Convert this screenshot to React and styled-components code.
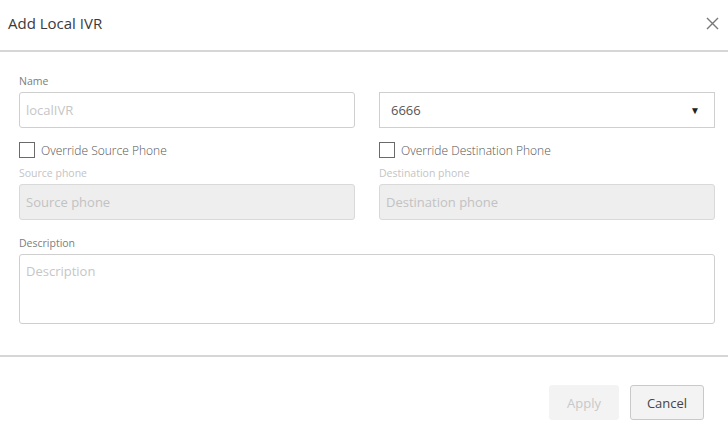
import React from 'react'
import styled, { createGlobalStyle } from 'styled-components'

const GlobalStyle = createGlobalStyle`
  html, body {
    margin: 0;
    padding: 0;
    background: #fff;
    font-family: 'Open Sans', 'Liberation Sans', sans-serif;
  }
  * { box-sizing: border-box; }
`

const Dialog = styled.div`
  width: 728px;
  height: 424px;
  background: #fff;
  overflow: hidden;
`

const Header = styled.div`
  height: 52px;
  display: flex;
  align-items: center;
  justify-content: space-between;
  padding: 0 6px 4px 8px;
  border-bottom: 2px solid #d6d6d6;
`

const Title = styled.h4`
  margin: 0;
  font-size: 15px;
  font-weight: 500;
  color: #3a3a3a;
`

const CloseButton = styled.button`
  border: none;
  background: none;
  padding: 0;
  width: 20px;
  height: 20px;
  display: flex;
  align-items: center;
  justify-content: center;
  cursor: pointer;
`

const Body = styled.div`
  height: 305px;
  padding: 22px 13px 0 19px;
  border-bottom: 2px solid #d6d6d6;
`

const Grid = styled.div`
  display: grid;
  grid-template-columns: 1fr 1fr;
  column-gap: 24px;
`

const Field = styled.div`
  display: flex;
  flex-direction: column;
  grid-column: ${p => (p.wide ? '1 / span 2' : 'auto')};
  margin-top: ${p => p.top || 0}px;
`

const Label = styled.label`
  display: block;
  height: 14px;
  line-height: 14px;
  margin-bottom: 4px;
  font-size: 10.5px;
  color: ${p => (p.muted ? '#c4c4c4' : '#7d7d7d')};
`

const Input = styled.input`
  height: 36px;
  width: 100%;
  padding: 0 6px;
  font-family: inherit;
  font-size: 13px;
  color: #555;
  border: 1px solid ${p => (p.disabled ? '#d9d9d9' : '#cfcfcf')};
  border-radius: 3px;
  background: ${p => (p.disabled ? '#eeeeee' : '#fff')};
  outline: none;
  &::placeholder {
    color: ${p => (p.disabled ? '#c2c2c2' : '#c6c6c6')};
  }
`

const TextArea = styled.textarea`
  height: 70px;
  width: 100%;
  padding: 7px 6px;
  font-family: inherit;
  font-size: 13px;
  color: #555;
  border: 1px solid #cfcfcf;
  border-radius: 3px;
  resize: none;
  outline: none;
  &::placeholder { color: #c6c6c6; }
`

const Select = styled.div`
  height: 36px;
  display: flex;
  align-items: center;
  justify-content: space-between;
  padding: 0 14px 0 11px;
  border: 1px solid #cfcfcf;
  font-size: 13px;
  color: #555;
`

const Arrow = styled.span`
  font-size: 10px;
  color: #222;
`

const CheckRow = styled.label`
  display: flex;
  align-items: center;
  gap: 6px;
  height: 16px;
  margin: 14px 0 8px;
  font-size: 12px;
  font-weight: 300;
  color: #555;
`

const Box = styled.span`
  width: 16px;
  height: 16px;
  border: 1px solid #6a6a6a;
  background: #fff;
`

const Footer = styled.div`
  display: flex;
  justify-content: flex-end;
  gap: 11px;
  padding: 28px 24px 0 0;
`

const Button = styled.button`
  height: 35px;
  padding: 0 ${p => (p.primary ? 17 : 15)}px;
  min-width: ${p => (p.primary ? 68 : 74)}px;
  font-family: inherit;
  font-size: 13px;
  border-radius: 3px;
  background: #f3f3f3;
  border: 1px solid ${p => (p.disabled ? '#f3f3f3' : '#c9c9c9')};
  color: ${p => (p.disabled ? '#c8c8c8' : '#444')};
`

export default function App() {
  return (
    <>
      <GlobalStyle />
      <Dialog>
        <Header>
          <Title>Add Local IVR</Title>
          <CloseButton aria-label="Close">
            <svg width="13" height="13" viewBox="0 0 13 13">
              <path d="M1 1L12 12M12 1L1 12" stroke="#777" strokeWidth="1.4" />
            </svg>
          </CloseButton>
        </Header>
        <Body>
          <Grid>
            <Field>
              <Label>Name</Label>
              <Input placeholder="localIVR" />
            </Field>
            <Field>
              <Label />
              <Select>
                6666
                <Arrow>▼</Arrow>
              </Select>
            </Field>
            <Field>
              <CheckRow><Box />Override Source Phone</CheckRow>
              <Label muted>Source phone</Label>
              <Input disabled placeholder="Source phone" />
            </Field>
            <Field>
              <CheckRow><Box />Override Destination Phone</CheckRow>
              <Label muted>Destination phone</Label>
              <Input disabled placeholder="Destination phone" />
            </Field>
            <Field wide top={16}>
              <Label>Description</Label>
              <TextArea placeholder="Description" />
            </Field>
          </Grid>
        </Body>
        <Footer>
          <Button primary disabled>Apply</Button>
          <Button>Cancel</Button>
        </Footer>
      </Dialog>
    </>
  )
}
